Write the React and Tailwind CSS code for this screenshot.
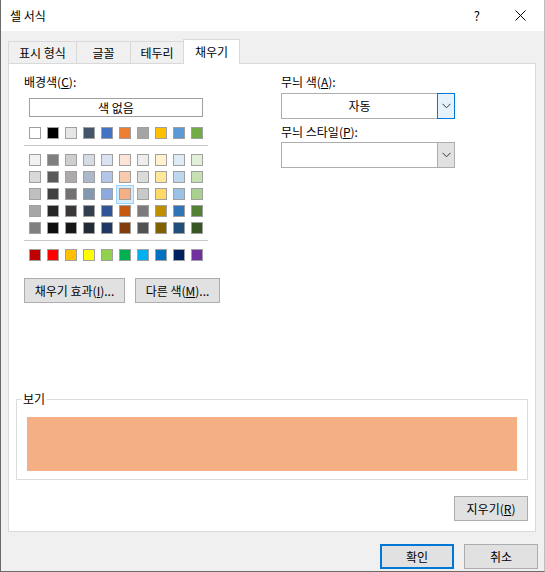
import React from "react";

const FONT = { fontFamily: '"Noto Sans CJK KR", "Noto Sans", sans-serif' };

const themeTop = ["#ffffff", "#000000", "#e7e6e6", "#44546a", "#4472c4", "#ed7d31", "#a5a5a5", "#ffc000", "#5b9bd5", "#70ad47"];

const themeShades = [
  ["#f2f2f2", "#7f7f7f", "#d0cece", "#d6dce4", "#d9e1f2", "#fce4d6", "#ededed", "#fff2cc", "#ddebf7", "#e2efda"],
  ["#d9d9d9", "#595959", "#aeaaaa", "#acb9ca", "#b4c6e7", "#f8cbad", "#dbdbdb", "#ffe699", "#bdd7ee", "#c6e0b4"],
  ["#bfbfbf", "#404040", "#757171", "#8497b0", "#8ea9db", "#f4b084", "#c9c9c9", "#ffd966", "#9bc2e6", "#a9d08e"],
  ["#a6a6a6", "#262626", "#3a3838", "#333f4f", "#305496", "#c65911", "#7b7b7b", "#bf8f00", "#2f75b5", "#548235"],
  ["#808080", "#0d0d0d", "#161616", "#222b35", "#203764", "#833c0c", "#525252", "#806000", "#1f4e78", "#375623"],
];

const standard = ["#c00000", "#ff0000", "#ffc000", "#ffff00", "#92d050", "#00b050", "#00b0f0", "#0070c0", "#002060", "#7030a0"];

function Swatch({ color, selected }) {
  return (
    <div className="relative w-[12px] h-[12px]">
      {selected && (
        <span className="absolute -left-[3px] -top-[3px] w-[18px] h-[19px] border border-[#99d1ff] bg-[#d9ecfb]" />
      )}
      <span
        className="absolute inset-0 border border-[#a0a0a0]"
        style={{ backgroundColor: color }}
      />
    </div>
  );
}

function SwatchRow({ colors, selectedIdx = -1 }) {
  return (
    <div className="flex gap-[6px] ml-[5px]">
      {colors.map((c, i) => (
        <Swatch key={i} color={c} selected={i === selectedIdx} />
      ))}
    </div>
  );
}

function Chevron() {
  return (
    <svg width="9" height="6" viewBox="0 0 9 6">
      <path d="M0.5 0.8 L4.5 4.8 L8.5 0.8" fill="none" stroke="#333" strokeWidth="1" />
    </svg>
  );
}

function Dropdown({ value, focused }) {
  return (
    <div className="flex w-[174px] h-[26px] bg-white border border-[#adadad]">
      <div className="flex-1 flex items-center justify-center text-[12px] text-black">{value}</div>
      <div
        className={
          focused
            ? "w-[18px] -my-px -mr-px h-[26px] border border-[#0078d7] bg-[#e5f1fb] flex items-center justify-center"
            : "w-[17px] h-full border-l border-[#adadad] bg-[#e1e1e1] flex items-center justify-center"
        }
      >
        <Chevron />
      </div>
    </div>
  );
}

function Button({ children, className = "" }) {
  return (
    <div
      className={`h-[25px] flex items-center justify-center bg-[#e1e1e1] border border-[#adadad] text-[12px] text-black ${className}`}
    >
      {children}
    </div>
  );
}

export default function App() {
  return (
    <div
      className="w-[545px] h-[572px] bg-[#f0f0f0] border-l border-b border-r border-l-[#6a6a6a] border-b-[#6a6a6a] border-r-[#c0c0c0] flex flex-col text-black"
      style={FONT}
    >
      {/* Title bar */}
      <div className="h-[31px] bg-white flex items-center shrink-0">
        <span className="pl-[9px] text-[12px]">셀 서식</span>
        <span className="ml-auto text-[13px] mr-[35px]">?</span>
        <svg width="11" height="11" viewBox="0 0 11 11" className="mr-[18px]">
          <path d="M0.5 0.5 L10.5 10.5 M10.5 0.5 L0.5 10.5" stroke="#000" strokeWidth="1" />
        </svg>
      </div>

      {/* Tabs */}
      <div className="ml-[7px] mt-[8px] h-[24px] flex items-end text-[12px] shrink-0">
        <div className="w-[68px] h-[22px] border-l border-t border-[#d9d9d9] flex items-center justify-center">표시 형식</div>
        <div className="w-[54px] h-[22px] border-l border-t border-[#d9d9d9] flex items-center justify-center">글꼴</div>
        <div className="w-[53px] h-[22px] border-l border-t border-[#d9d9d9] flex items-center justify-center">테두리</div>
        <div className="relative z-10 w-[57px] h-[25px] -mb-px bg-white border-l border-t border-r border-[#d9d9d9] flex items-center justify-center pb-[1px]">채우기</div>
      </div>

      {/* Panel */}
      <div className="ml-[7px] w-[528px] h-[469px] bg-white border border-[#d9d9d9] flex flex-col shrink-0 text-[12px]">
        <div className="flex pt-[10px]">
          {/* Background color */}
          <div className="w-[272px] pl-[15px] flex flex-col">
            <div className="h-[16px] leading-[16px]">
              배경색(<span className="underline">C</span>):
            </div>
            <div className="ml-[5px] mt-[8px] w-[174px] h-[19px] border border-[#a0a0a0] flex items-center justify-center">
              색 없음
            </div>
            <div className="mt-[10px]">
              <SwatchRow colors={themeTop} />
            </div>
            <div className="mt-[6px] w-[184px] h-px bg-[#c8c8c8]" />
            <div className="mt-[8px] flex flex-col gap-[5px]">
              {themeShades.map((row, i) => (
                <SwatchRow key={i} colors={row} selectedIdx={i === 2 ? 5 : -1} />
              ))}
            </div>
            <div className="mt-[6px] w-[184px] h-px bg-[#c8c8c8]" />
            <div className="mt-[8px]">
              <SwatchRow colors={standard} />
            </div>
            <div className="mt-[17px] flex gap-[10px]">
              <Button className="w-[101px]">
                채우기 효과(<span className="underline">I</span>)...
              </Button>
              <Button className="w-[85px]">
                다른 색(<span className="underline">M</span>)...
              </Button>
            </div>
          </div>

          {/* Pattern */}
          <div className="w-[174px] flex flex-col">
            <div className="h-[16px] leading-[16px]">
              무늬 색(<span className="underline">A</span>):
            </div>
            <div className="mt-[3px]">
              <Dropdown value="자동" focused />
            </div>
            <div className="mt-[5px] h-[16px] leading-[16px]">
              무늬 스타일(<span className="underline">P</span>):
            </div>
            <div className="mt-[2px]">
              <Dropdown value="" />
            </div>
          </div>
        </div>

        {/* Preview */}
        <div className="mt-auto mx-[7px] h-[81px] border border-[#dcdcdc] relative">
          <span className="absolute -top-[9px] left-[4px] bg-white px-[2px] leading-[16px]">보기</span>
          <div className="mx-[10px] mt-[17px] h-[54px] bg-[#f4b084]" />
        </div>

        <div className="mt-[16px] mb-[10px] mr-[7px] flex justify-end">
          <Button className="w-[74px]">
            지우기(<span className="underline">R</span>)
          </Button>
        </div>
      </div>

      {/* Footer buttons */}
      <div className="mt-[12px] flex justify-end gap-[10px] mr-[6px]">
        <div className="w-[74px] h-[25px] flex items-center justify-center bg-[#e1e1e1] border-2 border-[#0078d7] text-[12px]">
          확인
        </div>
        <Button className="w-[74px]">취소</Button>
      </div>
    </div>
  );
}
